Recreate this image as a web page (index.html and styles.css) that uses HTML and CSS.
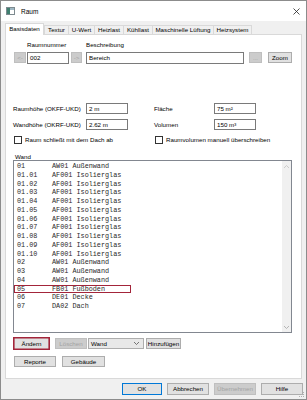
FILE: index.html
```html
<!DOCTYPE html>
<html lang="de">
<head>
<meta charset="utf-8">
<title>Raum</title>
<link rel="stylesheet" href="styles.css">
</head>
<body>
<div class="window">
  <div class="titlebar">
    <svg class="appicon" width="9" height="8" viewBox="0 0 9 8">
      <rect x="0.5" y="0.5" width="8" height="7" fill="#fff" stroke="#7d8a8f"/>
      <rect x="1" y="1" width="3" height="6" fill="#3f7f6f"/>
      <rect x="4" y="1" width="4" height="2" fill="#9fb8c4"/>
    </svg>
    <span class="title">Raum</span>
    <svg class="close" width="7" height="7" viewBox="0 0 7 7">
      <path d="M0.5 0.5 L6.5 6.5 M6.5 0.5 L0.5 6.5" stroke="#222" stroke-width="0.8"/>
    </svg>
  </div>

  <div class="content">
    <div class="tabs">
      <div class="tab active">Basisdaten</div>
      <div class="tab w-textur">Textur</div>
      <div class="tab w-uwert">U-Wert</div>
      <div class="tab w-heiz">Heizlast</div>
      <div class="tab w-kuehl">Kühllast</div>
      <div class="tab w-masch">Maschinelle Lüftung</div>
      <div class="tab w-sys">Heizsystem</div>
    </div>

    <div class="panel">
      <div class="labels-top">
        <span class="lbl-num">Raumnummer</span>
        <span class="lbl-desc">Beschreibung</span>
      </div>
      <div class="row-top">
        <div class="btn disabled arrow-l">&lt;-</div>
        <div class="input num">002</div>
        <div class="btn disabled arrow-r">-&gt;</div>
        <div class="input desc">Bereich</div>
        <div class="btn disabled dots">...</div>
        <div class="btn zoom">Zoom</div>
      </div>

      <div class="props">
        <div class="prop-col">
          <div class="prop"><span class="plabel">Raumhöhe (OKFF-UKD)</span><div class="input small">2 m</div></div>
          <div class="prop"><span class="plabel">Wandhöhe (OKRF-UKD)</span><div class="input small">2.62 m</div></div>
          <label class="check"><span class="box"></span>Raum schließt mit dem Dach ab</label>
        </div>
        <div class="prop-col right">
          <div class="prop"><span class="plabel r">Fläche</span><div class="input small">75 m²</div></div>
          <div class="prop"><span class="plabel r">Volumen</span><div class="input small">150 m³</div></div>
          <label class="check"><span class="box"></span>Raumvolumen manuell überschreiben</label>
        </div>
      </div>

      <div class="wand-label">Wand</div>
      <div class="listbox">
        <div class="items">
          <div class="item"><span class="code">01</span>AW01 Außenwand</div>
          <div class="item"><span class="code">01.01</span>AF001 Isolierglas</div>
          <div class="item"><span class="code">01.02</span>AF001 Isolierglas</div>
          <div class="item"><span class="code">01.03</span>AF001 Isolierglas</div>
          <div class="item"><span class="code">01.04</span>AF001 Isolierglas</div>
          <div class="item"><span class="code">01.05</span>AF001 Isolierglas</div>
          <div class="item"><span class="code">01.06</span>AF001 Isolierglas</div>
          <div class="item"><span class="code">01.07</span>AF001 Isolierglas</div>
          <div class="item"><span class="code">01.08</span>AF001 Isolierglas</div>
          <div class="item"><span class="code">01.09</span>AF001 Isolierglas</div>
          <div class="item"><span class="code">01.10</span>AF001 Isolierglas</div>
          <div class="item"><span class="code">02</span>AW01 Außenwand</div>
          <div class="item"><span class="code">03</span>AW01 Außenwand</div>
          <div class="item"><span class="code">04</span>AW01 Außenwand</div>
          <div class="item selected"><span class="code">05</span>FB01 Fußboden</div>
          <div class="item"><span class="code">06</span>DE01 Decke</div>
          <div class="item"><span class="code">07</span>DA02 Dach</div>
        </div>
        <div class="scrollbar">
          <svg width="7" height="5" viewBox="0 0 7 5"><path d="M1 4 L3.5 1.5 L6 4" fill="none" stroke="#c2c2c2" stroke-width="0.8"/></svg>
          <svg width="7" height="5" viewBox="0 0 7 5"><path d="M1 1 L3.5 3.5 L6 1" fill="none" stroke="#a6a6a6" stroke-width="0.8"/></svg>
        </div>
      </div>

      <div class="row-actions">
        <div class="btn focused w-aendern">Ändern</div>
        <div class="btn disabled w-loeschen">Löschen</div>
        <div class="combo"><span>Wand</span>
          <svg width="7" height="5" viewBox="0 0 7 5"><path d="M1 1 L3.5 3.5 L6 1" fill="none" stroke="#444" stroke-width="0.7"/></svg>
        </div>
        <div class="btn w-hinzu">Hinzufügen</div>
      </div>
      <div class="row-reports">
        <div class="btn w-rep">Reporte</div>
        <div class="btn w-geb">Gebäude</div>
      </div>
    </div>
  </div>

  <div class="footer">
    <div class="btn default w-ok">OK</div>
    <div class="btn w-foot">Abbrechen</div>
    <div class="btn disabled w-foot">Übernehmen</div>
    <div class="btn w-foot">Hilfe</div>
  </div>
  <svg class="grip" width="6" height="6" viewBox="0 0 6 6">
    <g fill="#b0b0b0"><rect x="4" y="0" width="1" height="1"/><rect x="2" y="2" width="1" height="1"/><rect x="4" y="2" width="1" height="1"/><rect x="0" y="4" width="1" height="1"/><rect x="2" y="4" width="1" height="1"/><rect x="4" y="4" width="1" height="1"/></g>
  </svg>
</div>
</body>
</html>
```

FILE: styles.css
```css
* { box-sizing: border-box; }
html, body { margin: 0; padding: 0; background: #fff; }
body { font-family: "Liberation Sans", Arial, sans-serif; font-size: 6.2px; color: #000; }

.window {
  position: relative;
  width: 307px; height: 400px;
  border: 1px solid #8c8c8c;
  background: #f0f0f0;
  display: flex; flex-direction: column;
}

.titlebar {
  height: 20px; background: #fff;
  display: flex; align-items: center;
  padding: 0 0 0 5px;
}
.title { font-size: 6.5px; margin-left: 6px; flex: 1; }
.close { margin-right: 6px; }

.content { padding: 2px 4px 0 4px; }

.tabs { display: flex; align-items: flex-end; height: 11px; }
.tab {
  height: 9px; line-height: 8px;
  border: 1px solid #d9d9d9; border-bottom: none;
  margin-left: -1px;
  background: #f0f0f0; text-align: center;
  white-space: nowrap;
}
.tab.active {
  height: 12px; line-height: 10px; width: 39px;
  background: #fff; margin-left: 0; margin-bottom: -1px;
  position: relative; z-index: 1;
}
.w-textur { width: 25px; margin-left: 0; }
.w-uwert { width: 27px; }
.w-heiz { width: 30px; }
.w-kuehl { width: 30px; }
.w-masch { width: 62px; }
.w-sys { width: 39px; }

.panel {
  height: 345px;
  background: #fff;
  border: 1px solid #d9d9d9;
  padding: 6px 0 0 7px;
}

.labels-top { height: 10px; line-height: 8px; display: flex; }
.lbl-num { margin-left: 14px; width: 59px; }

.row-top { display: flex; align-items: center; height: 13px; }

.btn {
  height: 11px; line-height: 9px;
  background: #e1e1e1; border: 1px solid #adadad;
  text-align: center; white-space: nowrap;
}
.btn.disabled { background: #cccccc; border-color: #bfbfbf; color: #a3a3a3; }
.btn.focused { border: 1px solid #a3253a; box-shadow: inset 0 0 0 0.6px #a3253a; height: 13px; line-height: 11px; }
.btn.default { border-color: #0078d7; }

.input {
  height: 12px; line-height: 10px;
  background: #fff; border: 1px solid #7a7a7a;
  padding-left: 2px; white-space: nowrap;
}
.arrow-l { width: 12px; margin-left: 1px; }
.num { width: 42px; margin-left: 1px; }
.arrow-r { width: 11px; margin-left: 2px; }
.desc { width: 158px; margin-left: 4px; }
.dots { width: 13px; margin-left: 5px; }
.zoom { width: 24px; margin-left: 6px; }

.props { display: flex; margin-top: 39px; }
.prop-col { width: 141px; display: flex; flex-direction: column; }
.prop { display: flex; align-items: center; height: 11px; margin-bottom: 5px; }
.plabel { width: 73px; }
.plabel.r { width: 60px; }
.input.small { width: 42px; height: 11px; line-height: 9px; }
.check { display: flex; align-items: center; height: 9px; }
.box { width: 8px; height: 8px; border: 1px solid #333; background: #fff; margin: 0 3px 0 1px; }

.wand-label { margin-top: 9px; margin-left: 2px; height: 7px; line-height: 7px; }
.listbox {
  width: 279px; height: 173px;
  border: 1px solid #828790; background: #fff;
  display: flex;
}
.items {
  flex: 1; padding-top: 1px;
  font-family: "Liberation Mono", "Courier New", monospace; font-size: 6.8px;
  color: #2a2a2a;
}
.item { height: 8.75px; line-height: 8.75px; padding-left: 3px; white-space: nowrap; width: 117px; }
.item.selected { outline: 1px solid #a3253a; outline-offset: -1px; }
.code { display: inline-block; width: 35px; }
.scrollbar {
  width: 9px; background: #f0f0f0;
  display: flex; flex-direction: column; justify-content: space-between; align-items: center;
  padding: 3px 0 2px 0;
}

.row-actions { display: flex; align-items: center; margin-top: 3px; height: 14px; }
.w-aendern { width: 37px; }
.w-loeschen { width: 32px; margin-left: 5px; }
.combo {
  width: 56px; height: 11px; margin-left: 1px;
  background: #e8e8e8; border: 1px solid #adadad;
  display: flex; align-items: center; justify-content: space-between;
  padding: 0 3px 0 2px;
}
.w-hinzu { width: 35px; margin-left: 2px; }

.row-reports { display: flex; margin-top: 6px; padding-left: 1px; }
.w-rep { width: 42px; }
.w-geb { width: 43px; margin-left: 6px; }

.footer { display: flex; justify-content: flex-end; padding: 4px 3px 0 0; }
.footer .btn { height: 12px; line-height: 10px; }
.w-ok { width: 40px; }
.w-foot { width: 42px; margin-left: 5px; }

.grip { position: absolute; right: 1px; bottom: 1px; }
```
